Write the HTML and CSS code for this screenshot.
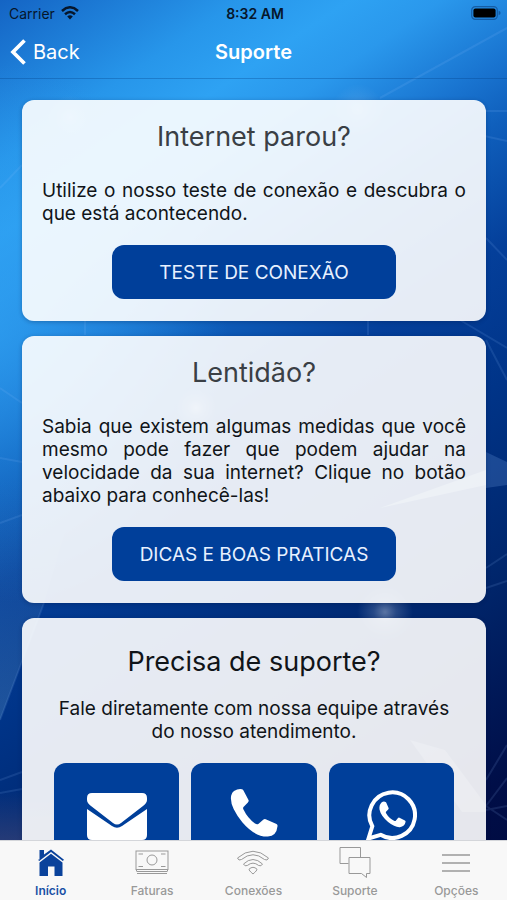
FILE: index.html
```html
<!DOCTYPE html>
<html lang="pt-BR">
<head>
<meta charset="utf-8">
<meta name="viewport" content="width=device-width, initial-scale=1">
<title>Suporte</title>
<link rel="stylesheet" href="styles.css">
</head>
<body>
<div class="app">
  <svg class="backdrop" viewBox="0 0 507 900" preserveAspectRatio="none" aria-hidden="true">
    <defs>
      <radialGradient id="glow"><stop offset="0" stop-color="#fff" stop-opacity=".35"/><stop offset=".4" stop-color="#fff" stop-opacity=".15"/><stop offset="1" stop-color="#fff" stop-opacity="0"/></radialGradient>
      <linearGradient id="haze" x1="0" y1="0" x2="0" y2="1"><stop offset="0" stop-color="#5a8fc0" stop-opacity="0"/><stop offset="1" stop-color="#5a8fc0" stop-opacity=".35"/></linearGradient>
      <linearGradient id="dusk" x1="0" y1="0" x2="0" y2="1"><stop offset="0" stop-color="#4a4a78" stop-opacity="0"/><stop offset="1" stop-color="#4a4a78" stop-opacity=".5"/></linearGradient>
    </defs>
    <path d="M0 480H80L44 603 0 720Z" fill="url(#haze)"/>
    <path d="M0 790H60V840H0Z" fill="url(#dusk)"/>
    <g fill="none" stroke="#8fc4ff" stroke-opacity=".13" stroke-width="2">
      <path d="M507 28 380 98M0 188 22 165M480 111h27M480 135l27 6M486 238l21 22M460 320l47 28M486 340l21 40M0 388l22 15M0 458l22 4M0 523l22-8M486 568l21-14M486 588l21-7M44 603 0 720M0 780l22-8M0 793l22-4M486 780l21-35M486 806l21-28M486 806l21 14M486 810l21-4M85 320v15M368 320v15"/>
    </g>
    <path d="M380 508 486 485V470Z" fill="#fff" fill-opacity=".3"/>
    <path d="M486 452 507 462V485L486 488Z" fill="#6c9be0" fill-opacity=".25"/>
    <path d="M410 740 445 750 486 805V812L462 812Z" fill="#fff" fill-opacity=".2"/>
    <circle cx="385" cy="612" r="28" fill="url(#glow)"/>
    <circle cx="358" cy="110" r="26" fill="url(#glow)" fill-opacity=".5"/>
    <circle cx="70" cy="117" r="22" fill="url(#glow)" fill-opacity=".5"/>
    <circle cx="196" cy="408" r="20" fill="url(#glow)"/>
  </svg>

  <header class="header">
    <div class="status">
      <div class="carrier">
        <span>Carrier</span>
        <svg width="18" height="14" viewBox="0 0 18 14" aria-hidden="true"><g fill="none" stroke="#06162b" stroke-width="2.5"><path d="M1 5Q9-2.4 17 5"/><path d="M4 8.2Q9 3.7 14 8.2"/></g><path d="M6.2 10.4Q9 8.2 11.8 10.4L9 13.4Z" fill="#06162b"/></svg>
      </div>
      <time class="clock">8:32 AM</time>
      <svg class="battery" width="30" height="14" viewBox="0 0 30 14" aria-hidden="true"><rect x=".7" y=".7" width="25.6" height="12.6" rx="3.6" fill="none" stroke="#0b3f7d" stroke-opacity=".6" stroke-width="1.2"/><rect x="2.4" y="2.4" width="22.2" height="9.2" rx="2" fill="#000"/><path d="M27.6 4.8q2 .6 2 2.2t-2 2.2Z" fill="#0b3f7d" fill-opacity=".6"/></svg>
    </div>
    <nav class="navbar">
      <button class="back" type="button">
        <svg width="17" height="28" viewBox="0 0 17 28" aria-hidden="true"><path d="M14.5 2.5 3 14l11.500 11.500" fill="none" stroke="#fff" stroke-width="3.700"/></svg>
        <span>Back</span>
      </button>
      <h1 class="page-title">Suporte</h1>
    </nav>
  </header>

  <main class="content">
    <section class="card">
      <h2 class="card-title">Internet parou?</h2>
      <p class="card-text">Utilize o nosso teste de conexão e descubra o que está acontecendo.</p>
      <button class="action" type="button">TESTE DE CONEXÃO</button>
    </section>
    <section class="card">
      <h2 class="card-title">Lentidão?</h2>
      <p class="card-text">Sabia que existem algumas medidas que você mesmo pode fazer que podem ajudar na velocidade da sua internet? Clique no botão abaixo para conhecê-las!</p>
      <button class="action" type="button">DICAS E BOAS PRATICAS</button>
    </section>
    <section class="card contact">
      <h2 class="card-title">Precisa de suporte?</h2>
      <p class="card-text">Fale diretamente com nossa equipe através do nosso atendimento.</p>
      <div class="tiles">
        <button class="tile" type="button" aria-label="E-mail">
          <svg width="60" height="52" viewBox="0 0 60 52" fill="#fff" aria-hidden="true"><path d="M5 4h50q5 0 5 5v2q0 3-4 6L34 34q-4 3-8 0L4 17Q0 14 0 11V9q0-5 5-5Z"/><path d="M0 20 25 37q5 3.500 10 0L60 20v26q0 5-5 5H5q-5 0-5-5Z"/></svg>
        </button>
        <button class="tile" type="button" aria-label="Telefone">
          <svg width="52" height="52" viewBox="0 0 52 52" fill="#fff" aria-hidden="true"><path d="M6 2Q10-.5 14 .2q1.200.3 1.600 1.500L20.500 11q.6 1.300-.6 2.400L15.500 18q-.8 1 0 2.500Q19.500 29 27 34.500q2 1.400 3.300.4L35.500 30.500q1-.8 2.200-.3L48.500 35q1.300.7 1 2.200-1 9.800-9.700 10.300Q27 48 14.500 33.500 1 17 3.200 6.500 4 3.300 6 2Z"/></svg>
        </button>
        <button class="tile" type="button" aria-label="WhatsApp">
          <svg width="52" height="52" viewBox="0 0 52 52" aria-hidden="true"><path d="M3.500 49.500 7.300 37.300A22.800 22.800 0 1 1 15.600 45.800Z" fill="none" stroke="#fff" stroke-width="4"/><path d="M16.500 13.500q2-1.500 4-.6.6.2.9 1l2.200 5q.3.8-.4 1.500L21 22.800q-.4.6.1 1.500 3 5.300 8.400 7.600.8.400 1.300-.2L33 29q.6-.7 1.500-.3l5.400 2.700q.8.400.7 1.400-.8 4.800-5.800 5.400-5 .3-11.700-5.100-7.300-6.300-8.600-12.500-.6-4.600 2-7.100Z" fill="#fff"/></svg>
        </button>
      </div>
    </section>
  </main>

  <nav class="tabbar">
    <a class="tab active" href="#inicio">
      <svg width="34" height="34" viewBox="0 0 34 34" aria-hidden="true"><path d="M5.500 13.500V4h4.500v4.500L17 3.500l13 10.300-1.200 1.300L17 6 5.200 15.100 4 13.800Z" fill="#0a429b"/><path d="M17 7.800 28.500 16.500V30h-8v-9.500h-6.500V30H5.500V16.500Z" fill="#0a429b"/></svg>
      <span>Início</span>
    </a>
    <a class="tab" href="#faturas">
      <svg width="34" height="34" viewBox="0 0 34 34" fill="none" stroke="#999" aria-hidden="true"><rect x="1" y="5" width="32" height="18.500"/><circle cx="17" cy="14" r="5"/><path d="M3.500 8h4.500M26 8h4.500M3.500 20.500h4.500M26 20.500h4.500M2 25.500h30M2 27.500h30M1.500 23.500v2M32.500 23.500v2"/></svg>
      <span>Faturas</span>
    </a>
    <a class="tab" href="#conexoes">
      <svg width="34" height="34" viewBox="0 0 34 34" fill="none" stroke="#999" stroke-linejoin="round" aria-hidden="true"><path d="M1.500 12Q17-1.500 32.500 12 31.500 15.300 28.500 13.500 17 4 5.500 13.500 2.500 15.300 1.500 12Z"/><path d="M7.500 18Q17 9 26.500 18 25.300 20.800 22.700 19.500 17 14.800 11.300 19.500 8.700 20.800 7.500 18Z"/><path d="M13 23.200q4-3.800 8 0 .2 1.200-4 4.800-4.200-3.600-4-4.800Z"/></svg>
      <span>Conexões</span>
    </a>
    <a class="tab" href="#suporte">
      <svg width="34" height="34" viewBox="0 0 34 34" fill="none" stroke="#999" aria-hidden="true"><path d="M10.500 17.500H2V1.500H22.500V11.500"/><path d="M11 11.500H32V27.500H28.500V31.500L23.500 27.500H11Z"/></svg>
      <span>Suporte</span>
    </a>
    <a class="tab" href="#opcoes">
      <svg width="34" height="34" viewBox="0 0 34 34" fill="none" stroke="#999" stroke-width="1.300" aria-hidden="true"><path d="M3 9h28M3 17h28M3 25h28"/></svg>
      <span>Opções</span>
    </a>
  </nav>
</div>
</body>
</html>
```
FILE: styles.css
```css
* {
  box-sizing: border-box;
}

body {
  margin: 0;
  font-family: Inter, "Liberation Sans", sans-serif;
  color: #101418;
}

h1, h2, p {
  margin: 0;
  font-weight: 400;
}

button {
  border: 0;
  padding: 0;
  font: inherit;
  color: #fff;
  background: none;
}

svg {
  display: block;
  flex: none;
}

.app {
  position: relative;
  display: flex;
  flex-direction: column;
  height: 100vh;
  overflow: hidden;
  background:
    radial-gradient(ellipse 45% 30% at 0% 37%, rgba(46, 158, 240, 0.7), transparent),
    linear-gradient(146deg, #1464c4 0%, #2796ea 13%, #2ea2f3 19%, #2a98ec 24%, #1974d0 32%, #0f5fbc 37%, #043f9a 47%, #003488 58%, #00266c 73%, #000e48 90%, #000a3e 100%);
}

.backdrop {
  position: absolute;
  inset: 0;
  width: 100%;
  height: 100%;
}

.header {
  position: relative;
  border-bottom: 1px solid rgba(0, 60, 130, 0.3);
}

.status {
  display: grid;
  grid-template-columns: 1fr auto 1fr;
  align-items: center;
  height: 26px;
  padding: 0 6px 0 9px;
  font-size: 14px;
  color: #06162b;
}

.carrier {
  display: flex;
  align-items: center;
  gap: 6px;
}

.clock {
  font-weight: 600;
}

.battery {
  justify-self: end;
}

.navbar {
  display: grid;
  grid-template-columns: 1fr auto 1fr;
  align-items: center;
  height: 52px;
  padding: 0 10px;
}

.back {
  display: flex;
  align-items: center;
  gap: 6px;
  justify-self: start;
  font-size: 20px;
}

.page-title {
  font-size: 20px;
  font-weight: 600;
  color: #fff;
}

.content {
  position: relative;
  flex: 1;
  min-height: 0;
  overflow: hidden;
  display: flex;
  flex-direction: column;
  gap: 15px;
  padding: 21px 21px 0 22px;
}

.card {
  flex: none;
  display: flex;
  flex-direction: column;
  align-items: center;
  padding: 21px 20px 22px;
  border-radius: 12px;
  background: rgba(255, 255, 255, 0.9);
  box-shadow: 0 1px 4px rgba(0, 20, 60, 0.3);
}

.card-title {
  margin-bottom: 26px;
  font-size: 27px;
  line-height: 32px;
  color: #3a3f45;
}

.card-text {
  align-self: stretch;
  font-size: 19px;
  line-height: 23px;
  text-align: justify;
}

.action {
  width: 284px;
  max-width: 100%;
  height: 54px;
  margin-top: 20px;
  border-radius: 12px;
  font-size: 19px;
  color: #e8f1ff;
  background: #003f9a;
}

.contact {
  padding: 28px 32px 22px;
}

.contact .card-title {
  margin-bottom: 19px;
  color: #101418;
}

.contact .card-text {
  text-align: center;
}

.tiles {
  display: grid;
  grid-template-columns: repeat(3, 1fr);
  gap: 12px;
  align-self: stretch;
  margin-top: 20px;
}

.tile {
  display: flex;
  align-items: center;
  justify-content: center;
  height: 104px;
  border-radius: 12px;
  background: #003f9a;
}

.tabbar {
  position: relative;
  display: grid;
  grid-template-columns: repeat(5, 1fr);
  height: 60px;
  border-top: 1px solid #d4d6da;
  background: #f8f8f8;
}

.tab {
  display: flex;
  flex-direction: column;
  align-items: center;
  gap: 2px;
  padding-top: 5px;
  font-size: 12px;
  font-weight: 500;
  line-height: 18px;
  color: #999;
  text-decoration: none;
}

.tab.active {
  font-weight: 600;
  color: #1a50a5;
}
```
